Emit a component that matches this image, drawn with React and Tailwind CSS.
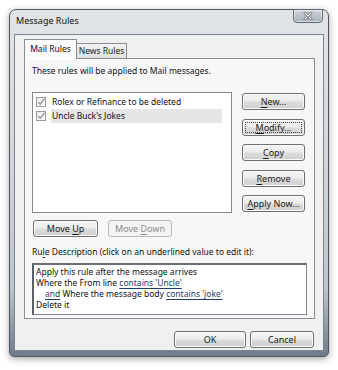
import React from "react";

const font = { fontFamily: '"Noto Sans", "Open Sans", sans-serif' };

function Btn({ children, className = "", focused = false, disabled = false }) {
  return (
    <div
      className={
        "relative flex items-center justify-center rounded-[3px] border text-[9px] leading-none " +
        (disabled
          ? "border-[#b5b9bd] bg-[#f4f4f4] text-[#8c8c8c] "
          : "border-[#707070] bg-[linear-gradient(to_bottom,#f4f4f4_0%,#ececec_48%,#dcdcdc_52%,#cfcfcf_100%)] text-[#1a1a1a] shadow-[inset_0_0_0_1px_#fbfbfb] ") +
        className
      }
    >
      {focused && (
        <div className="pointer-events-none absolute inset-[2px] border border-dotted border-[#444]" />
      )}
      <span>{children}</span>
    </div>
  );
}

function Check() {
  return (
    <svg width="10" height="10" viewBox="0 0 10 10" className="shrink-0">
      <defs>
        <linearGradient id="cb" x1="0" y1="0" x2="1" y2="1">
          <stop offset="0" stopColor="#ececec" />
          <stop offset="1" stopColor="#ffffff" />
        </linearGradient>
      </defs>
      <rect x="0.5" y="0.5" width="9" height="9" fill="url(#cb)" stroke="#9a9a9a" />
      <path d="M2.2 5.2 L4.2 7.4 L8.4 1.8" fill="none" stroke="#858a85" strokeWidth="1.2" />
    </svg>
  );
}

function U({ children }) {
  return <span className="underline decoration-[0.7px] underline-offset-[1.5px]">{children}</span>;
}

function L({ children }) {
  return (
    <span className="text-[#1f3a6e] underline decoration-[0.7px] underline-offset-[1.5px]">{children}</span>
  );
}

export default function App() {
  return (
    <div className="h-[370px] w-[338px] overflow-hidden bg-white pl-[9px] pt-[9px]" style={font}>
      <div className="relative flex h-[348px] w-[320px] flex-col rounded-t-[7px] rounded-b-[5px] border border-[#4d5763] bg-[linear-gradient(to_bottom,#e2e5e8_0%,#d3d8dd_40%,#bcc4cd_80%,#6f7b89_100%)] px-[4px] pb-[5px] shadow-[0_2px_7px_rgba(0,0,0,0.35)]">
        {/* title bar */}
        <div className="flex h-[24px] shrink-0 items-center pl-[2px] pb-[2px] text-[9px] text-[#111]">
          Message Rules
        </div>
        {/* close button */}
        <div className="absolute right-[5px] top-[-1px] flex h-[14px] w-[30px] items-center justify-center rounded-b-[4px] border border-[#5f6873] bg-[linear-gradient(to_bottom,#d2d6db_0%,#bcc2c9_50%,#a9b0b8_100%)] shadow-[inset_0_0_0_1px_rgba(255,255,255,0.5)]">
          <svg width="10" height="8" viewBox="0 0 10 8">
            <path d="M2 1 L8 7 M8 1 L2 7" stroke="#4a525c" strokeWidth="2.6" strokeLinecap="round" />
            <path d="M2 1 L8 7 M8 1 L2 7" stroke="#ffffff" strokeWidth="1.3" strokeLinecap="round" />
          </svg>
        </div>

        {/* client area */}
        <div className="flex flex-1 flex-col border border-[#7b8592] bg-[#f0f0f0] pl-[9px] pr-[7px] pt-[4px] text-[8.5px] text-[#111]">
          {/* tabs */}
          <div className="flex h-[20px] items-end">
            <div className="relative z-10 flex h-[20px] w-[53px] items-center justify-center border border-b-0 border-[#898c95] bg-[#fbfbfb] pb-[1px]">
              Mail Rules
            </div>
            <div className="flex h-[16px] w-[50px] items-center justify-center border border-b-0 border-l-0 border-[#898c95] bg-[linear-gradient(to_bottom,#f3f3f3,#e0e0e0)] text-[#222]">
              News Rules
            </div>
          </div>
          {/* tab panel */}
          <div className="-mt-px flex h-[261px] w-[291px] flex-col border border-[#898c95] bg-[#f7f7f7] pl-[7px] pt-[6px] shadow-[inset_0_0_0_1px_#ffffff]">
            <div className="h-[11px] leading-[11px]">These rules will be applied to Mail messages.</div>
            <div className="mt-[16px] flex gap-[10px]">
              <div className="flex h-[121px] w-[200px] flex-col border border-[#828790] bg-white px-[3px] pt-[2px]">
                <div className="flex h-[14px] items-center">
                  <Check />
                  <span className="ml-[6px]">Rolex or Refinance to be deleted</span>
                </div>
                <div className="flex h-[14px] items-center">
                  <Check />
                  <span className="ml-[5px] flex h-[14px] w-[171px] items-center bg-[#e6e6e6] pl-[1px]">
                    Uncle Buck&apos;s Jokes
                  </span>
                </div>
              </div>
              <div className="flex flex-col gap-[8.5px] pt-[1px]">
                <Btn className="h-[17px] w-[63px]"><U>N</U>ew...</Btn>
                <Btn className="h-[17px] w-[63px]" focused><U>M</U>odify...</Btn>
                <Btn className="h-[17px] w-[63px]"><U>C</U>opy</Btn>
                <Btn className="h-[17px] w-[63px]"><U>R</U>emove</Btn>
                <Btn className="h-[17px] w-[63px]"><U>A</U>pply Now...</Btn>
              </div>
            </div>
            <div className="mt-[7px] flex gap-[10px] pl-[1px]">
              <Btn className="h-[17px] w-[65px]">Move <U>U</U>p</Btn>
              <Btn className="h-[17px] w-[64px]" disabled>Move <U>D</U>own</Btn>
            </div>
            <div className="mt-[9px] h-[11px] leading-[11px]">
              Ru<U>l</U>e Description (click on an underlined value to edit it):
            </div>
            <div className="mt-[6px] flex h-[52px] w-[275px] flex-col border border-[#828790] border-l-[2px] border-t-[2px] border-l-[#5a5e66] border-t-[#6b6f77] bg-white pl-[2px] pt-[1px] leading-[11px]">
              <div>Apply this rule after the message arrives</div>
              <div>Where the From line <L>contains &apos;Uncle&apos;</L></div>
              <div className="pl-[9px]"><L>and</L> Where the message body <L>contains &apos;joke&apos;</L></div>
              <div>Delete it</div>
            </div>
          </div>
          {/* bottom buttons */}
          <div className="mt-[12px] flex justify-end gap-[4px] pr-[2px]">
            <Btn className="h-[17px] w-[72px]">OK</Btn>
            <Btn className="h-[17px] w-[64px]">Cancel</Btn>
          </div>
        </div>
      </div>
    </div>
  );
}
